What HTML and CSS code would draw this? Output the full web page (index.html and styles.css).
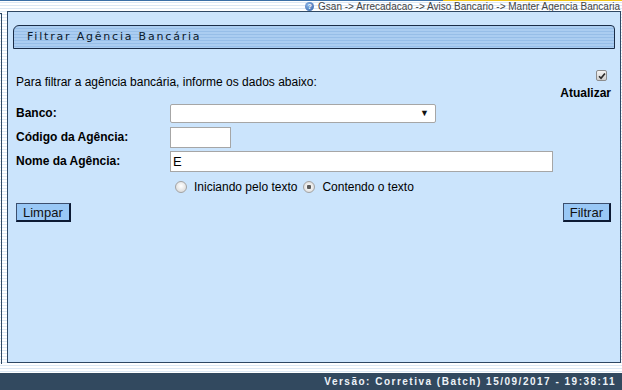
FILE: index.html
```html
<!DOCTYPE html>
<html lang="pt-BR">
<head>
    <meta charset="UTF-8">
    <meta name="viewport" content="width=device-width, initial-scale=1.0">
    <title>Filtrar Agência Bancária</title>
    <link rel="stylesheet" href="styles.css">
</head>
<body>
    <div class="topbar">
        <div class="caminho">
            <span class="ajuda">?</span>
            <span>Gsan -&gt; Arrecadacao -&gt; Aviso Bancario -&gt; Manter Agencia Bancaria</span>
        </div>
    </div>
    <div class="conteudo">
        <div class="lateral"><div class="lateral-borda"></div></div>
        <div class="painel">
            <div class="titulo">Filtrar Agência Bancária</div>
            <form class="filtro">
                <div class="intro">
                    <span class="intro-texto">Para filtrar a agência bancária, informe os dados abaixo:</span>
                    <div class="atualizar">
                        <span class="check">
                            <svg width="8" height="8" viewBox="0 0 9 9"><path d="M1.2 4.8 L3.4 7 L7.8 1.6" fill="none" stroke="#2b2b2b" stroke-width="1.9"/></svg>
                        </span>
                        <div>Atualizar</div>
                    </div>
                </div>
                <div class="linha">
                    <label>Banco:</label>
                    <div class="select-box">
                        <select class="select">
                            <option></option>
                        </select>
                    </div>
                </div>
                <div class="linha">
                    <label>Código da Agência:</label>
                    <input type="text" class="campo campo-codigo">
                </div>
                <div class="linha">
                    <label>Nome da Agência:</label>
                    <input type="text" class="campo campo-nome" value="E">
                </div>
                <div class="opcoes">
                    <span class="radio"></span>
                    <span class="opcao">Iniciando pelo texto</span>
                    <span class="radio marcado"></span>
                    <span class="opcao">Contendo o texto</span>
                </div>
                <div class="botoes">
                    <button type="button" class="botao">Limpar</button>
                    <button type="button" class="botao">Filtrar</button>
                </div>
            </form>
        </div>
    </div>
    <div class="faixa"></div>
    <footer>Versão: Corretiva (Batch) 15/09/2017 - 19:38:11</footer>
</body>
</html>
```

FILE: styles.css
```css
body {
    margin: 0;
    font-family: "Liberation Sans", Arial, sans-serif;
    font-size: 12px;
    color: #000000;
    height: 390px;
    overflow: hidden;
    background: repeating-linear-gradient(to bottom, #ffffff 0 2px, #dce8f4 2px 3px);
}

.topbar {
    height: 10px;
    border-top: 1px solid #3b6fa6;
    border-image: linear-gradient(to right, #3b6fa6 443px, #f0c419 443px) 1;
    border-left: 0;
    border-right: 0;
    border-bottom: 0;
}

.caminho {
    display: flex;
    justify-content: flex-end;
    align-items: center;
    gap: 4px;
    height: 10px;
    font-size: 10px;
    color: #444444;
    white-space: nowrap;
    overflow: hidden;
    padding-right: 2px;
}

.ajuda {
    width: 9px;
    height: 9px;
    border-radius: 50%;
    background: radial-gradient(circle at 35% 35%, #8db4e6, #2c5ea6);
    color: #ffffff;
    font-size: 7px;
    font-weight: bold;
    line-height: 9px;
    text-align: center;
}

.conteudo {
    display: flex;
    height: 352px;
}

.lateral {
    width: 7px;
    padding-top: 2px;
}

.lateral-borda {
    width: 1px;
    height: 100%;
    border-right: 1px solid #2e4763;
    border-top: 1px solid #2e4763;
}

.painel {
    flex: 1;
    margin-right: 1px;
    background-color: #cbe4fc;
    border: 1px solid #2e4763;
}

.titulo {
    margin: 13px 5px 0;
    height: 22px;
    line-height: 22px;
    padding-left: 13px;
    border: 1px solid #1a2c47;
    border-radius: 6px 4px 0 0;
    background: repeating-linear-gradient(to bottom, #abcdf1 0 2px, #97bee8 2px 3px);
    font-family: "DejaVu Sans", Verdana, sans-serif;
    font-size: 11px;
    letter-spacing: 1.8px;
    color: #0c1a2c;
}

.filtro {
    padding: 0 9px 0 8px;
}

.intro {
    display: flex;
    justify-content: space-between;
    align-items: flex-start;
    margin: 21px 0 1px;
}

.intro-texto {
    margin-top: 5px;
}

.atualizar {
    display: flex;
    flex-direction: column;
    align-items: flex-end;
    font-weight: bold;
    font-size: 12px;
    gap: 5px;
}

.check {
    width: 9px;
    height: 9px;
    margin-right: 4px;
    border: 1px solid #8c8c8c;
    border-radius: 2px;
    background: linear-gradient(#f4f4f4, #cfcfcf);
    display: flex;
    align-items: center;
    justify-content: center;
}

.linha {
    display: flex;
    align-items: center;
    height: 24px;
}

.linha label {
    width: 154px;
    font-weight: bold;
}

.select-box {
    position: relative;
}

.select-box::after {
    content: "▼";
    position: absolute;
    right: 7px;
    top: 4px;
    font-size: 9px;
    color: #111111;
    pointer-events: none;
}

.select {
    appearance: none;
    width: 266px;
    height: 19px;
    margin: 0;
    border: 1px solid #a6a6a6;
    border-radius: 2px;
    background-color: #ffffff;
}

.campo {
    box-sizing: border-box;
    height: 21px;
    margin: 0;
    padding: 0 2px;
    border: 1px solid #a6a6a6;
    background-color: #ffffff;
    font-family: "Liberation Sans", Arial, sans-serif;
    font-size: 13px;
}

.campo-codigo {
    width: 61px;
}

.campo-nome {
    width: 383px;
}

.opcoes {
    display: flex;
    align-items: center;
    height: 28px;
    padding-left: 159px;
}

.radio {
    box-sizing: border-box;
    width: 12px;
    height: 12px;
    border-radius: 50%;
    border: 1px solid #a3a3a3;
    background: radial-gradient(circle at 50% 40%, #ffffff, #d2d2d2);
    margin-right: 7px;
}

.radio.marcado {
    background: radial-gradient(circle, #5a5a5a 0 2px, #f2f2f2 2.5px, #d2d2d2);
    margin-left: 6px;
}

.botoes {
    display: flex;
    justify-content: space-between;
    margin-top: 2px;
}

.botao {
    height: 19px;
    padding: 0 6px;
    background-color: #99c8f6;
    border: 1px solid #3c4f6e;
    border-right: 2px solid #0d1a33;
    border-bottom: 2px solid #0d1a33;
    font-family: "Liberation Sans", Arial, sans-serif;
    font-size: 13px;
    color: #111111;
    line-height: 15px;
    cursor: pointer;
}

.faixa {
    height: 10px;
}

footer {
    height: 17px;
    background-color: #32495f;
    color: #eef3f8;
    font-size: 10px;
    font-weight: bold;
    letter-spacing: 1.5px;
    display: flex;
    align-items: center;
    justify-content: flex-end;
    padding-right: 6px;
}
```
